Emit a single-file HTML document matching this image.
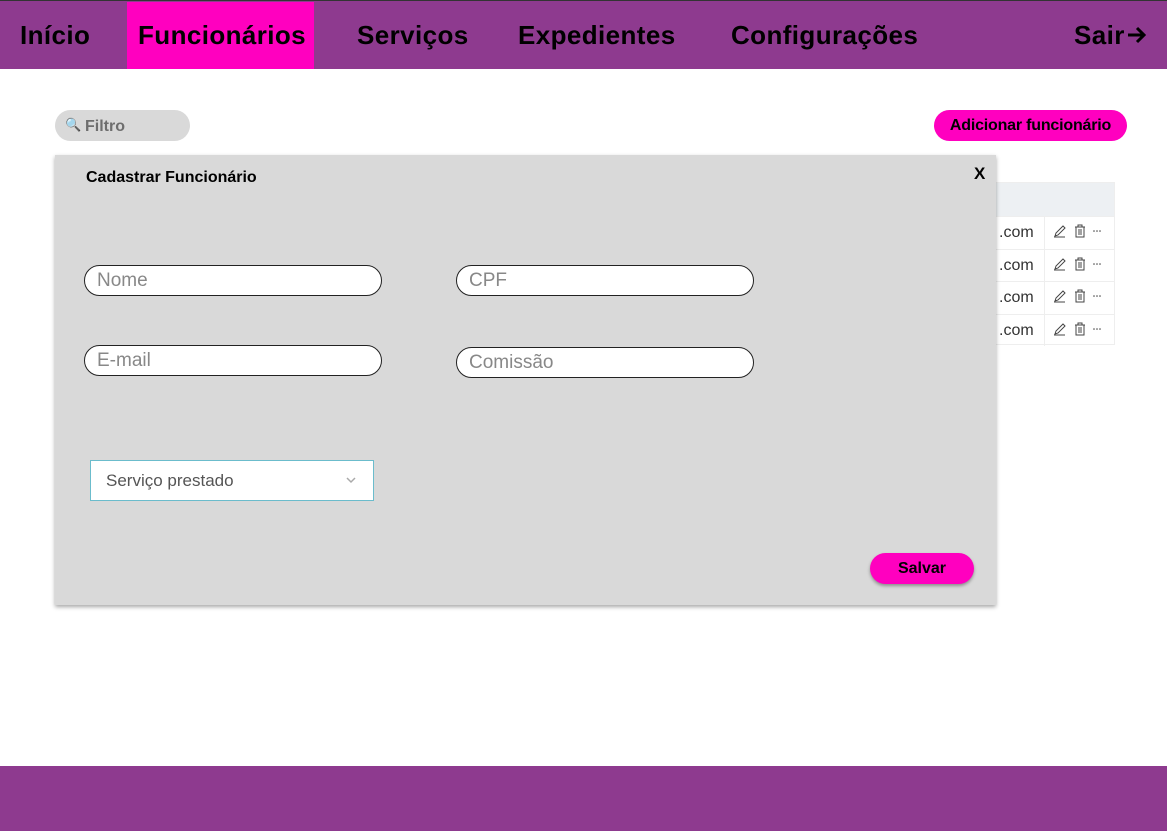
<!DOCTYPE html>
<html><head><meta charset="utf-8"><style>
*{margin:0;padding:0;box-sizing:border-box}
body{width:1167px;height:831px;background:#fff;font-family:"Liberation Sans",sans-serif;position:relative;overflow:hidden}
.nav{position:absolute;left:0;top:0;width:1167px;height:69px;background:#8e3a8f;border-top:1px solid #333}
.nav span{position:absolute;top:19px;font-weight:bold;font-size:26px;color:#000;letter-spacing:0.4px}
.act{position:absolute;left:127px;top:1px;width:187px;height:67px;background:#ff00bf}
.foot{position:absolute;left:0;top:766px;width:1167px;height:65px;background:#8e3a8f}
.filtro{position:absolute;left:55px;top:110px;width:135px;height:31px;background:#d9d9d9;border-radius:16px;font-weight:bold;font-size:16px;color:#6e6e6e;padding:8px 0 0 30px}
.add{position:absolute;left:934px;top:110px;width:193px;height:31px;background:#ff00bf;border-radius:16px;font-weight:bold;font-size:16px;color:#000;text-align:center;line-height:32px;letter-spacing:-0.2px}
.tbl{position:absolute;left:990px;top:182px;width:125px;height:163px;border:1px solid #eee}
.th{height:33px;background:#edf0f3}
.row{height:32.5px;border-top:1px solid #eee;position:relative;font-size:16px;color:#333}
.row .c{position:absolute;left:8px;top:7px}
.row .sep{position:absolute;left:53px;top:0;bottom:0;border-left:1px solid #eee}
.row svg{position:absolute;left:62px;top:7px}
.modal{position:absolute;left:55px;top:155px;width:941px;height:450px;background:#d9d9d9;box-shadow:0 2px 4px rgba(0,0,0,.35)}
.inp{position:absolute;width:298px;height:31px;background:#fff;border:1px solid #222;border-radius:16px;font-size:19px;color:#888;padding:4px 0 0 12px}
.sel{position:absolute;left:35px;top:305px;width:284px;height:41px;background:#fff;border:1px solid #6bbccc;font-size:17px;color:#555;padding:10px 0 0 15px}
.save{position:absolute;left:815px;top:398px;width:104px;height:31px;background:#ff00bf;border-radius:16px;font-weight:bold;font-size:16px;text-align:center;line-height:32px;box-shadow:0 2px 3px rgba(0,0,0,.35)}
</style></head><body>
<div class="nav"><div class="act"></div>
<span style="left:20px">Início</span>
<span style="left:138px">Funcionários</span>
<span style="left:357px">Serviços</span>
<span style="left:518px">Expedientes</span>
<span style="left:731px">Configurações</span>
<span style="left:1074px">Sair</span>
<svg style="position:absolute;left:1126px;top:24px" width="22" height="20" viewBox="0 0 22 20"><path d="M2 10H18M11 3L18 10L11 17" stroke="#000" stroke-width="3" fill="none"/></svg>
</div>
<div class="filtro"><span style="position:absolute;left:10px;top:7px;font-size:13px">🔍</span>Filtro</div>
<div class="add">Adicionar funcionário</div>
<div class="tbl"><div class="th"></div>
<div class="row"><span class="c">.com</span><div class="sep"></div><svg width="50" height="14" viewBox="0 0 50 14"><path d="M2 12L3 9L10 2L12 4L5 11ZM1 13H12" stroke="#444" fill="none"/><path d="M22 3H32M25 3V1H29V3M23 3V13H31V3M26 5V11M28 5V11" stroke="#444" fill="none"/><circle cx="41" cy="7" r=".8" fill="#444"/><circle cx="44" cy="7" r=".8" fill="#444"/><circle cx="47" cy="7" r=".8" fill="#444"/></svg></div>
<div class="row"><span class="c">.com</span><div class="sep"></div><svg width="50" height="14" viewBox="0 0 50 14"><path d="M2 12L3 9L10 2L12 4L5 11ZM1 13H12" stroke="#444" fill="none"/><path d="M22 3H32M25 3V1H29V3M23 3V13H31V3M26 5V11M28 5V11" stroke="#444" fill="none"/><circle cx="41" cy="7" r=".8" fill="#444"/><circle cx="44" cy="7" r=".8" fill="#444"/><circle cx="47" cy="7" r=".8" fill="#444"/></svg></div>
<div class="row"><span class="c">.com</span><div class="sep"></div><svg width="50" height="14" viewBox="0 0 50 14"><path d="M2 12L3 9L10 2L12 4L5 11ZM1 13H12" stroke="#444" fill="none"/><path d="M22 3H32M25 3V1H29V3M23 3V13H31V3M26 5V11M28 5V11" stroke="#444" fill="none"/><circle cx="41" cy="7" r=".8" fill="#444"/><circle cx="44" cy="7" r=".8" fill="#444"/><circle cx="47" cy="7" r=".8" fill="#444"/></svg></div>
<div class="row"><span class="c">.com</span><div class="sep"></div><svg width="50" height="14" viewBox="0 0 50 14"><path d="M2 12L3 9L10 2L12 4L5 11ZM1 13H12" stroke="#444" fill="none"/><path d="M22 3H32M25 3V1H29V3M23 3V13H31V3M26 5V11M28 5V11" stroke="#444" fill="none"/><circle cx="41" cy="7" r=".8" fill="#444"/><circle cx="44" cy="7" r=".8" fill="#444"/><circle cx="47" cy="7" r=".8" fill="#444"/></svg></div>
</div>
<div class="modal">
<div style="position:absolute;left:31px;top:14px;font-weight:bold;font-size:16px">Cadastrar Funcionário</div>
<div style="position:absolute;left:919px;top:9px;font-weight:bold;font-size:17px">X</div>
<div class="inp" style="left:29px;top:110px">Nome</div>
<div class="inp" style="left:401px;top:110px">CPF</div>
<div class="inp" style="left:29px;top:190px">E-mail</div>
<div class="inp" style="left:401px;top:192px">Comissão</div>
<div class="sel">Serviço prestado<svg style="position:absolute;right:17px;top:16px" width="10" height="7" viewBox="0 0 10 7"><path d="M1 1L5 5L9 1" stroke="#aaa" stroke-width="1.5" fill="none"/></svg></div>
<div class="save">Salvar</div>
</div>
<div class="foot"></div>
</body></html>
